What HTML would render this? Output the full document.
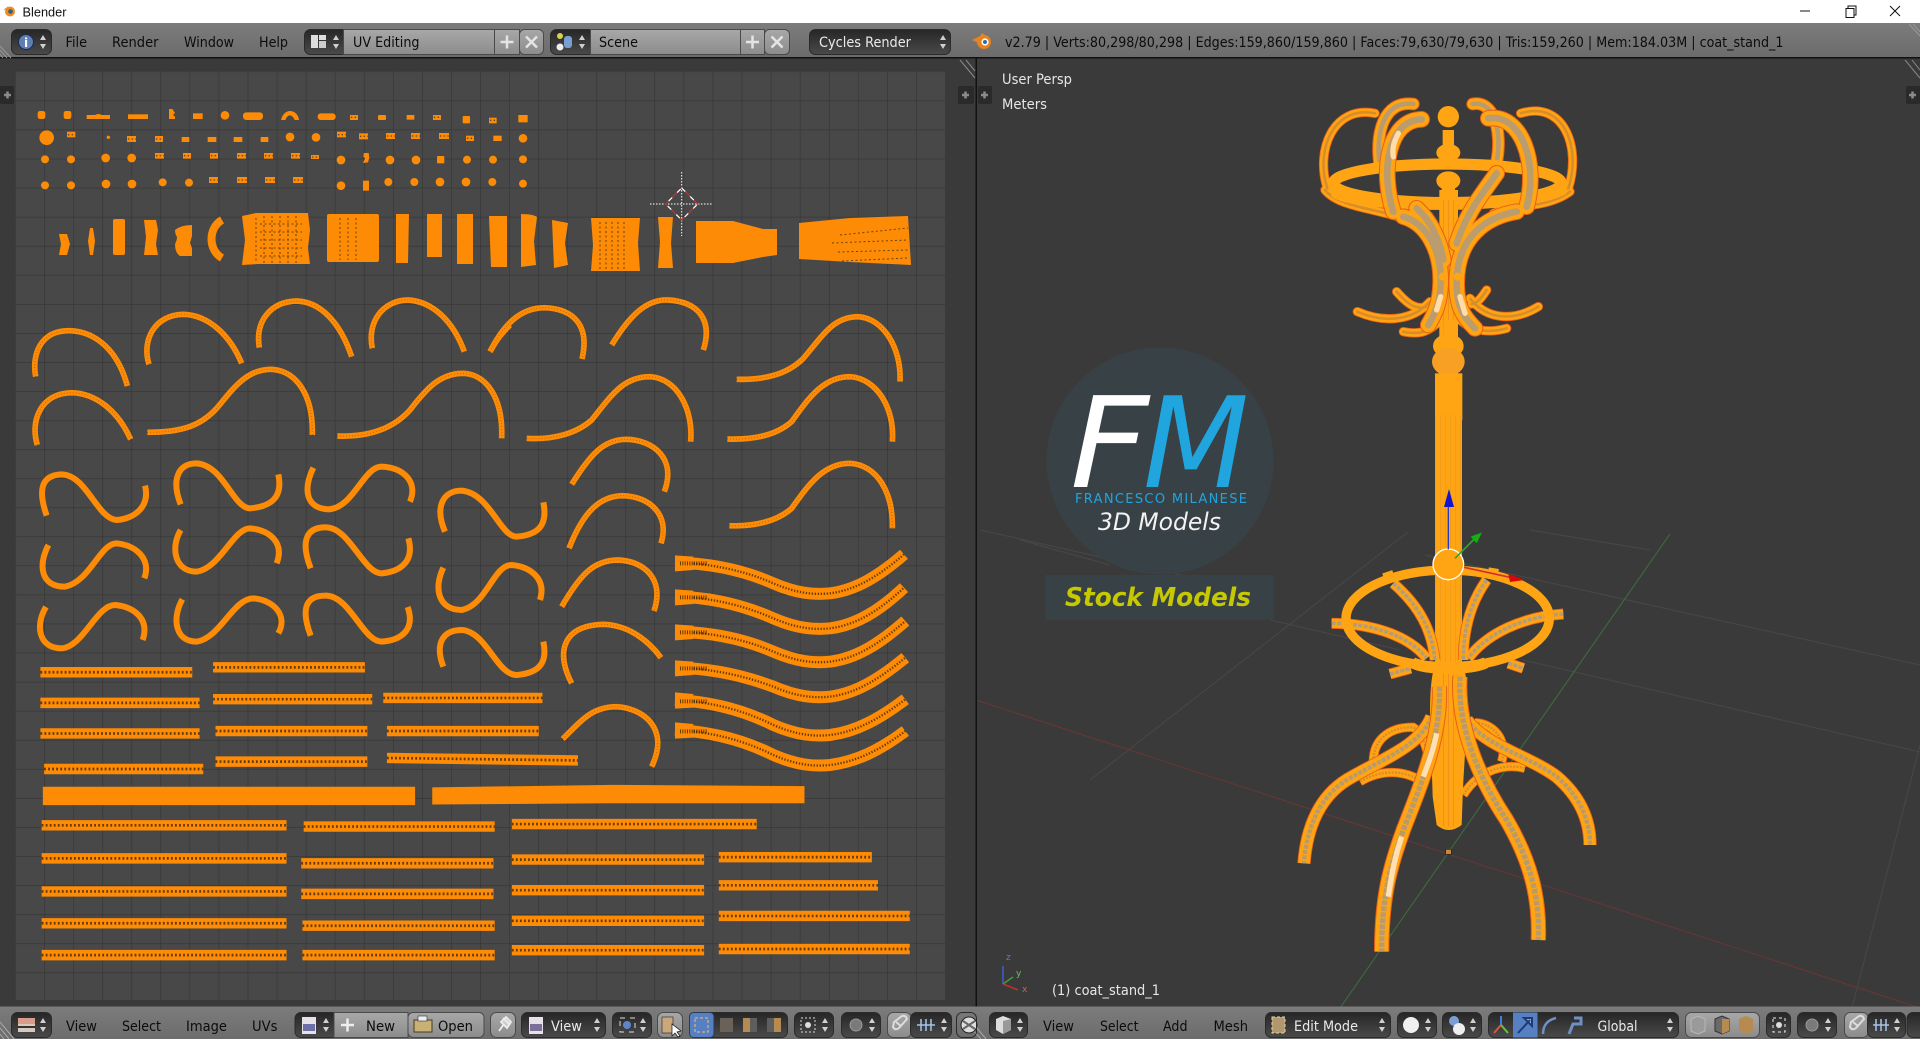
<!DOCTYPE html>
<html><head><meta charset="utf-8"><title>Blender</title>
<style>
html,body{margin:0;padding:0;background:#3a3a3a;overflow:hidden}
svg{display:block}
text{font-family:"DejaVu Sans","Liberation Sans",sans-serif;font-size:14px}
.k{fill:#0c0c0c}.w{fill:#eaeaea}
.d{fill:url(#dk);stroke:#2a2a2a;stroke-width:1}
.l{fill:url(#lt);stroke:#4a4a4a;stroke-width:1}
.o{fill:#fd8b05}
</style></head><body>
<svg xmlns="http://www.w3.org/2000/svg" width="1920" height="1039" viewBox="0 0 1920 1039">
<defs>
<linearGradient id="dk" x1="0" y1="0" x2="0" y2="1"><stop offset="0" stop-color="#262626"/><stop offset="1" stop-color="#4a4a4a"/></linearGradient>
<linearGradient id="lt" x1="0" y1="0" x2="0" y2="1"><stop offset="0" stop-color="#a8a8a8"/><stop offset="1" stop-color="#8c8c8c"/></linearGradient>
<linearGradient id="bar" x1="0" y1="0" x2="0" y2="1"><stop offset="0" stop-color="#7c7c7c"/><stop offset="1" stop-color="#6c6c6c"/></linearGradient>
<pattern id="grid" patternUnits="userSpaceOnUse" x="15.2" y="71.5" width="29.06" height="29.06"><path d="M0,0H29.06M0,0V29.06" stroke="#343434" stroke-width="1.2" fill="none"/></pattern>
<pattern id="poleg" patternUnits="userSpaceOnUse" width="5" height="7"><rect width="5" height="7" fill="#ffa412"/><path d="M0,0V7" stroke="#dc8f28" stroke-width=".8"/></pattern>
<g id="ud"><path d="M-3,-2L0,-7L3,-2ZM-3,2L0,7L3,2Z" fill="#d0d0d0"/></g>

<g id="arcsA" fill="none">
<path d="M47,275C35,210 60,135 150,137C230,140 295,200 322,303"/>
<path d="M387,238C365,170 400,90 490,88C565,90 630,150 665,235"/>
<path d="M718,188C705,110 750,50 830,48C900,50 960,110 995,215"/>
<path d="M1057,190C1040,110 1090,45 1165,45C1240,50 1300,110 1333,200"/>
<path d="M52,480C30,410 60,325 155,323C230,325 295,380 332,463"/>
<path d="M382,442C480,442 540,425 590,370C640,310 680,252 755,253C830,258 880,330 877,450"/>
<path d="M952,453C1050,457 1120,430 1170,375C1220,310 1260,265 1330,265C1400,268 1450,340 1445,460"/>
<path d="M1410,200C1430,165 1440,150 1470,120"/>
</g>
<g id="arcsB" fill="none">
<path d="M30,200C70,120 120,68 195,68C280,72 330,120 306,222"/>
<path d="M395,180C450,90 500,42 565,45C650,50 700,100 670,195"/>
<path d="M770,283C850,285 920,270 970,220C1030,150 1060,95 1135,95C1210,100 1265,190 1260,290"/>
<path d="M140,460C220,465 290,445 335,405C395,330 430,275 510,275C590,280 640,370 632,470"/>
<path d="M742,462C820,465 890,450 935,410C985,340 1030,275 1110,275C1190,280 1245,370 1237,470"/>
<path d="M275,598C330,510 370,463 440,463C520,465 590,520 553,620"/>
<path d="M267,790C310,680 360,632 430,632C510,635 570,690 543,775"/>
<path d="M245,965C300,870 340,825 415,825C490,828 555,880 522,978"/>
<path d="M275,1195C230,1110 240,1022 370,1018C440,1020 500,1060 543,1118"/>
<path d="M248,1362C310,1300 340,1265 410,1265C490,1270 570,1330 515,1445"/>
<path d="M748,722C820,725 890,710 935,670C985,600 1030,535 1110,535C1190,540 1240,620 1237,730"/>
</g>
<g id="waves" fill="none">
<path d="M585,833C700,835 800,860 880,895C950,925 1000,930 1050,925C1130,915 1200,870 1272,808"/>
<path d="M585,935C700,937 800,965 880,1000C950,1030 1000,1035 1050,1030C1130,1020 1200,975 1272,908"/>
<path d="M585,1040C700,1042 800,1065 880,1100C950,1130 1000,1135 1050,1130C1130,1120 1200,1075 1276,1008"/>
<path d="M585,1148C700,1150 800,1175 880,1205C950,1235 1000,1240 1050,1235C1130,1225 1200,1180 1276,1118"/>
<path d="M585,1245C700,1250 800,1280 880,1320C950,1350 1000,1355 1050,1350C1130,1340 1200,1300 1276,1243"/>
<path d="M585,1335C700,1340 800,1370 880,1410C950,1440 1000,1445 1050,1440C1130,1430 1200,1395 1276,1338"/>
</g>
<g id="strips" fill="none">
<path d="M33,549H157M174,545H298M33,574H163M174,571H304M313,570H443M33,599H163M176,597H300M316,597H440M36,628H166M176,622H300M316,619L472,621"/>
<path d="M34,674H234M248,675H404M418,673H618M34,701H234M246,705H403M418,702H575M587,700H712M34,728H234M246,730H403M418,727H575M587,723H717M34,754H234M247,756H404M418,752H575M587,748H743M34,780H234M247,780H404M418,776H575M587,775H743"/>
</g>

<g id="st_back" fill="none">
<path d="M300,262C285,160 310,60 400,72"/>
<path d="M650,245C668,150 640,60 578,72"/>
</g>
<g id="st_outer" fill="none">
<path d="M142,325C105,210 160,75 285,100"/>
<path d="M865,325C905,200 850,60 722,100"/>
<path d="M135,330C180,385 300,385 380,420"/>
<path d="M870,335C800,385 720,370 640,400"/>
<path d="M232,695C300,725 390,730 450,665"/>
<path d="M775,680C700,725 620,720 570,655"/>
<path d="M350,635C385,675 410,690 440,680"/>
<path d="M620,630C600,660 590,670 575,672"/>
<path d="M370,755C420,765 450,755 480,720"/>
<path d="M680,745C620,762 570,750 535,715"/>
</g>
<g id="st_front" fill="none">
<path d="M340,395C300,270 325,120 425,118"/>
<path d="M740,380C775,250 725,100 625,115"/>
<path d="M370,410C440,430 485,510 482,610C480,670 465,700 445,735"/>
<path d="M710,395C620,410 530,470 530,610C530,680 550,710 585,745"/>
<path d="M410,385C450,420 480,480 490,540"/>
<path d="M650,280C600,350 560,400 530,490"/>
</g>
<g id="sb_struts" fill="none">
<path d="M340,190C420,260 455,330 465,420"/>
<path d="M620,180C570,250 550,330 550,420"/>
<path d="M155,310C280,310 390,350 440,415"/>
<path d="M850,282C730,290 620,340 565,415"/>
<path d="M330,462L392,445"/>
<path d="M685,430L730,445"/>
</g>
<g id="sb_arch" fill="none">
<path d="M280,725C280,650 340,620 400,622C430,640 440,690 450,725"/>
<path d="M240,785C300,750 370,745 435,790"/>
<path d="M665,725C685,660 640,610 585,608"/>
<path d="M550,825C600,745 680,730 735,745"/>
</g>
<g id="sb_back" fill="none">
<path d="M455,590C420,680 300,720 200,780C120,830 80,920 72,1030"/>
<path d="M560,600C620,680 750,710 830,770C900,830 930,900 930,975"/>
</g>
<g id="sb_front" fill="none">
<path d="M478,500C485,650 420,800 370,930C330,1040 305,1130 305,1295"/>
<path d="M540,470C530,620 600,780 680,900C750,1020 780,1130 775,1260"/>
</g>
</defs>

<rect width="1920" height="1039" fill="#3a3a3a"/>
<!-- title bar -->
<rect width="1920" height="23" fill="#fff"/>
<circle cx="10" cy="11.5" r="5" fill="#f08a1a"/><circle cx="10.500" cy="11.500" r="2.300" fill="#2b5f95"/><path d="M3,10L8,6.500L9,9Z" fill="#f08a1a"/>
<text x="22.500" y="16.500" textLength="44" lengthAdjust="spacingAndGlyphs" style="font-family:'Liberation Sans',sans-serif;font-size:13px" fill="#111">Blender</text>
<path d="M1800,11H1810" stroke="#111" stroke-width="1"/>
<path d="M1846,8.500h8v9h-8zM1848,8.500v-2.500h8v9h-2" stroke="#111" fill="none" stroke-width="1"/>
<path d="M1890,6L1900,16M1900,6L1890,16" stroke="#111" stroke-width="1"/>

<!-- top bar -->
<rect y="23" width="1920" height="34" fill="url(#bar)"/>
<rect y="57" width="1920" height="1.500" fill="#111"/>
<path d="M0,46L11,58M0,50L7,58M0,54L3,58M1909,24L1920,36M1913,24L1920,32" stroke="#999" stroke-width="1" fill="none"/>
<rect class="d" x="11.500" y="29.500" width="40" height="25" rx="6"/>
<circle cx="26" cy="42" r="7.500" fill="#5d7fb5" stroke="#1c2a45"/><text x="26" y="47" text-anchor="middle" style="font-size:12px;font-weight:bold" fill="#fff">i</text>
<use href="#ud" x="43" y="42"/>
<text class="k" x="65.500" y="47" textLength="21.500" lengthAdjust="spacingAndGlyphs">File</text>
<text class="k" x="112" y="47" textLength="46.500" lengthAdjust="spacingAndGlyphs">Render</text>
<text class="k" x="184" y="47" textLength="50" lengthAdjust="spacingAndGlyphs">Window</text>
<text class="k" x="259" y="47" textLength="29" lengthAdjust="spacingAndGlyphs">Help</text>
<rect class="d" x="304.500" y="29.500" width="44" height="25" rx="6"/>
<rect x="311" y="35" width="7" height="13" fill="#ddd"/><rect x="319" y="35" width="7" height="5" fill="#ddd"/><rect x="319" y="41" width="7" height="7" fill="#ccc"/>
<use href="#ud" x="336" y="42"/>
<rect class="l" x="343.500" y="29.500" width="151" height="25"/>
<rect class="l" x="494.500" y="29.500" width="25" height="25"/>
<rect class="l" x="519.500" y="29.500" width="24" height="25" rx="5"/>
<text class="k" x="353" y="47" textLength="66.500" lengthAdjust="spacingAndGlyphs">UV Editing</text>
<path d="M500.500,42H513.500M507,35.500V48.500" stroke="#e4e4e4" stroke-width="2.500"/>
<path d="M526,36.500L537,47.500M537,36.500L526,47.500" stroke="#e4e4e4" stroke-width="2.500"/>
<rect class="d" x="550.500" y="29.500" width="44" height="25" rx="6"/>
<circle cx="560" cy="36" r="3" fill="#d8d24e"/><circle cx="560" cy="47" r="3.500" fill="#eee"/><rect x="564" y="36" width="8" height="12" rx="3" fill="#7a9ed0"/>
<use href="#ud" x="582" y="42"/>
<rect class="l" x="590.500" y="29.500" width="150" height="25"/>
<rect class="l" x="740.500" y="29.500" width="24" height="25"/>
<rect class="l" x="764.500" y="29.500" width="25" height="25" rx="5"/>
<text class="k" x="599" y="47" textLength="39" lengthAdjust="spacingAndGlyphs">Scene</text>
<path d="M746,42H759M752.500,35.500V48.500" stroke="#e4e4e4" stroke-width="2.500"/>
<path d="M771.500,36.500L782.500,47.500M782.500,36.500L771.500,47.500" stroke="#e4e4e4" stroke-width="2.500"/>
<rect class="d" x="809.500" y="29.500" width="141" height="25" rx="6"/>
<text class="w" x="819" y="47" textLength="92" lengthAdjust="spacingAndGlyphs">Cycles Render</text>
<use href="#ud" x="943" y="42"/>
<circle cx="984" cy="42" r="7" fill="#e8831f"/><circle cx="985" cy="42" r="3.600" fill="#fff"/><circle cx="985" cy="42" r="2" fill="#2f6bb0"/><path d="M972,40L980,36L982,33L985,35L978,43Z" fill="#e8831f"/>
<text class="k" x="1005" y="47" textLength="778.500" lengthAdjust="spacingAndGlyphs">v2.79 | Verts:80,298/80,298 | Edges:159,860/159,860 | Faces:79,630/79,630 | Tris:159,260 | Mem:184.03M | coat_stand_1</text>

<!-- UV panel -->
<rect x="15" y="71" width="930" height="929" fill="#484848"/>
<rect x="15" y="71" width="930" height="929" fill="url(#grid)"/>
<rect x="0" y="86" width="14" height="18" rx="2" fill="#2a2a2a"/>
<path d="M4,95H11M7.500,91.500V98.500" stroke="#8a8a8a" stroke-width="2.500"/>

<!-- small islands -->
<g class="o" transform="translate(0,60) scale(.33333)">
<rect x="113" y="153" width="23" height="24" rx="7"/><rect x="191" y="153" width="23" height="24" rx="7"/>
<path d="M260,165h25q10,-6 20,0h25v12h-70z"/><rect x="384" y="163" width="60" height="14"/>
<path d="M507,147h10l8,12l-6,6l6,5v7h-18z"/><rect x="579" y="160" width="29" height="17"/><circle cx="675" cy="166" r="13"/>
<rect x="729" y="157" width="60" height="23" rx="10"/>
<path d="M843,180C848,160 860,153 870,153C882,153 895,162 897,180H884C880,170 874,166 870,166C865,166 860,170 856,180Z"/>
<rect x="953" y="160" width="54" height="20" rx="9"/>
<rect x="1050" y="165" width="24" height="15"/><rect x="1134" y="165" width="24" height="15" rx="3"/><rect x="1220" y="165" width="23" height="14"/><rect x="1299" y="165" width="24" height="15"/>
<rect x="1388" y="168" width="22" height="22" rx="3"/><rect x="1467" y="173" width="23" height="17"/><rect x="1555" y="165" width="28" height="22"/>
<circle cx="140" cy="233" r="22"/><rect x="201" y="215" width="25" height="17"/><circle cx="325" cy="232" r="5"/>
<rect x="381" y="228" width="27" height="18"/><rect x="465" y="228" width="24" height="18"/><rect x="545" y="231" width="23" height="15"/><rect x="623" y="231" width="26" height="15"/><rect x="701" y="231" width="26" height="15"/><rect x="782" y="231" width="23" height="15"/>
<circle cx="870" cy="231" r="13"/><circle cx="948" cy="232" r="13"/>
<rect x="1011" y="215" width="27" height="17"/><rect x="1077" y="220" width="27" height="18"/><rect x="1158" y="219" width="27" height="18"/><rect x="1233" y="219" width="27" height="18"/><rect x="1317" y="219" width="30" height="18"/><rect x="1398" y="227" width="24" height="16"/><rect x="1480" y="227" width="25" height="16"/><circle cx="1569" cy="235" r="13"/>
<circle cx="135" cy="298" r="12"/><circle cx="213" cy="298" r="12"/><circle cx="317" cy="294" r="13"/><circle cx="395" cy="294" r="13"/>
<rect x="465" y="279" width="27" height="17"/><rect x="549" y="279" width="24" height="17"/><rect x="630" y="279" width="24" height="17"/><rect x="711" y="279" width="27" height="17"/><rect x="792" y="279" width="27" height="17"/><rect x="873" y="279" width="27" height="17"/><rect x="933" y="285" width="24" height="12"/>
<circle cx="1023" cy="300" r="13"/><path d="M1092,279h14l2,14l-4,14l-15,2l6,-14l-5,-6z"/><circle cx="1170" cy="300" r="13"/><circle cx="1248" cy="300" r="13"/><rect x="1311" y="288" width="22" height="22" rx="3"/><circle cx="1401" cy="299" r="12"/><circle cx="1479" cy="299" r="12"/><circle cx="1569" cy="298" r="12"/>
<circle cx="135" cy="376" r="12"/><circle cx="213" cy="376" r="12"/><circle cx="318" cy="372" r="13"/><circle cx="396" cy="372" r="13"/><circle cx="488" cy="367" r="12"/><circle cx="567" cy="368" r="12"/>
<rect x="627" y="351" width="27" height="18"/><rect x="711" y="351" width="30" height="18"/><rect x="795" y="351" width="30" height="18"/><rect x="879" y="351" width="30" height="18"/>
<circle cx="1023" cy="377" r="13"/><rect x="1089" y="362" width="18" height="30"/><circle cx="1165" cy="366" r="12"/><circle cx="1243" cy="366" r="12"/><circle cx="1320" cy="366" r="13"/><circle cx="1398" cy="366" r="13"/><circle cx="1477" cy="366" r="12"/><circle cx="1569" cy="371" r="12"/>
</g>
<g transform="translate(0,60) scale(.33333)" stroke="#3a3a3a" stroke-width="4" fill="none" stroke-dasharray="4 7" stroke-dashoffset="-3" opacity=".85">
<path d="M1050,172H1074M1299,172H1323M201,224H226M381,237H408M465,237H489M1011,224H1038M1077,229H1104M1158,228H1185M1233,228H1260M1317,228H1347M1398,235H1422M465,287H492M549,287H573M630,287H654M711,287H738M792,287H819M873,287H900M933,291H957M627,360H654M711,360H741M795,360H825M879,360H909M1467,181H1490"/>
</g>

<!-- top strip row -->
<g class="o">
<path d="M59,234h8l3,10l-3,11h-8l2,-11z"/><path d="M90,228h3l2,13l-2,14h-3l-2,-14z"/>
<rect x="113" y="219" width="12" height="36" rx="2"/><path d="M144,220h12l2,10l-2,14l2,11h-14l2,-18z"/>
<path d="M175,230q6,-5 17,-5v11l-2,7l2,5v8h-12q-5,-3 -5,-12q2,-4 2,-7q-2,-3 -2,-7z"/>
<path d="M242,216L256,213H308L310,230L308,248L310,264H258L242,265L245,240Z"/><rect x="327" y="214" width="52" height="48" rx="2"/>
<path d="M396,214h13l-1,49h-12zM427,214h15v43h-15zM457,214h16v50h-16zM489,216h18v51h-16z"/>
<path d="M521,214q12,0 16,3l-3,24l2,24l-15,2zM552,220l16,3l-3,20l3,22l-14,3zM591,218h49l-2,25l2,28h-49l2,-26zM658,217h15l-2,26l2,25h-15l2,-26z"/>
<path d="M696,221H733L763,229L777,229V255L763,257L733,263H696Z"/>
<path d="M799,223L850,218L908,216L911,265L850,262L799,259Z"/>
</g>
<path d="M222,220C208,228 208,250 222,258" fill="none" stroke="#fd8b05" stroke-width="8"/>
<g stroke="#3c2a10" stroke-width="1" fill="none" stroke-dasharray="2 2.500" opacity=".75">
<path d="M256,218V262M264,216V264M272,216V264M280,216V264M288,216V264M296,216V264M340,218V260M348,218V260M356,218V260M600,222V270M606,222V270M612,222V270M618,222V270M624,222V270"/>
<path d="M260,224H302M260,232H302M260,240H302M260,248H302M260,256H302"/>
<path d="M840,235L908,228M832,243L908,240M838,252L908,250M842,261L908,258"/>
</g>

<!-- crosshair -->
<path d="M650,204H713M681.700,172V236" stroke="#fff" stroke-width="1" stroke-dasharray="1.500 1.500" fill="none"/>
<path d="M681.700,188L697.700,204L681.700,220L665.700,204Z" stroke="#b03a3a" stroke-width="1.200" fill="none"/>
<path d="M681.700,188L697.700,204L681.700,220L665.700,204Z" stroke="#fff" stroke-width="1.200" fill="none" stroke-dasharray="5 7"/>

<!-- curved islands -->
<g transform="translate(20,285) scale(.33333)">
<use href="#arcsA" stroke="#fd8b05" stroke-width="17"/>
<use href="#arcsA" stroke="#2a2010" stroke-width="3" stroke-dasharray="2 7" opacity=".45"/>
<g fill="none" stroke="#fd8b05" stroke-width="18">
<path d="M80,692C55,620 60,570 125,568C200,570 230,700 290,705C350,700 390,660 375,602"/>
<path d="M482,658C455,590 470,535 530,535C610,540 640,670 690,670C750,665 790,640 775,568"/>
<path d="M880,548C850,610 855,670 925,673C1000,670 1030,545 1085,545C1150,548 1195,590 1170,650"/>
<path d="M85,780C55,840 60,905 135,905C210,890 240,775 290,775C345,780 395,820 373,880"/>
<path d="M482,735C450,790 465,860 530,860C600,850 640,730 690,730C745,735 795,770 770,835"/>
<path d="M872,850C845,780 850,725 920,727C990,730 1030,865 1085,865C1140,860 1185,830 1165,760"/>
<path d="M78,966C45,1020 55,1090 125,1090C190,1085 230,960 285,960C340,965 390,1000 368,1065"/>
<path d="M487,943C455,1000 465,1070 530,1070C600,1060 640,940 700,940C760,945 805,990 775,1045"/>
<path d="M872,1052C845,980 850,930 920,932C990,935 1030,1070 1085,1070C1150,1065 1185,1030 1163,966"/>
<path d="M1275,740C1245,670 1265,617 1325,617C1410,625 1440,755 1490,755C1550,750 1585,725 1570,652"/>
<path d="M1270,848C1240,910 1255,975 1325,975C1400,960 1420,840 1475,840C1530,845 1580,880 1560,945"/>
<path d="M1270,1145C1245,1080 1265,1035 1325,1035C1400,1040 1430,1170 1490,1170C1550,1165 1585,1140 1570,1070"/>
</g>
</g>
<g transform="translate(480,285) scale(.33333)">
<use href="#arcsB" stroke="#fd8b05" stroke-width="17"/>
<use href="#arcsB" stroke="#2a2010" stroke-width="3" stroke-dasharray="2 7" opacity=".45"/>
<use href="#waves" stroke="#fd8b05" stroke-width="36"/>
<use href="#waves" stroke="#2a1a05" stroke-width="7" stroke-dasharray="4 5" opacity=".7"/>
<path fill="#fd8b05" d="M585,811L640,815V855L585,859ZM585,913L640,917V957L585,961ZM585,1018L640,1022V1062L585,1066ZM585,1126L640,1130V1170L585,1174ZM585,1222L640,1227V1268L585,1271ZM585,1312L640,1317V1358L585,1361Z"/>
<path d="M600,835H680M600,937H680M600,1042H680M600,1150H680M600,1249H680M600,1339H680" stroke="#2a1a05" stroke-width="12" stroke-dasharray="3 4" fill="none" opacity=".7"/>
</g>

<!-- straight strips -->
<g transform="scale(1.2245)">
<use href="#strips" stroke="#fd8b05" stroke-width="8.500"/>
<use href="#strips" stroke="#2a1a05" stroke-width="2.200" stroke-dasharray="1.500 1.800" opacity=".7"/>
<path d="M35,642.500H339V657.500H35Z" fill="#fd8b05"/>
<path d="M353,643L500,641L657,642V656L500,656L353,657Z" fill="#fd8b05"/>
</g>

<!-- viewport -->
<rect x="976" y="58.500" width="944" height="950" fill="#3a3a3a"/>
<g fill="none" stroke-width="1">
<path d="M980,530L1248,590M1425,555L1920,665M1530,530L1650,550M1523,660L1920,752" stroke="#484848"/>
<path d="M1408,532L1090,780M1020,540L1110,565M1270,620L1400,650M1920,745L1852,1008" stroke="#484848"/>
<path d="M976,700L1920,1008" stroke="#6a3636"/>
<path d="M1670,534L1340,1008" stroke="#3f6f3f"/>
</g>
<rect x="975.500" y="58" width="1.500" height="950" fill="#111"/>
<path d="M960,60L975,78M966,60L975,71M1905,60L1920,78M1912,60L1920,70" stroke="#8a8a8a" stroke-width="1" fill="none"/>
<rect x="958" y="86" width="16" height="18" rx="2" fill="#2a2a2a"/><rect x="978" y="86" width="14" height="18" rx="2" fill="#2a2a2a"/><rect x="1906" y="86" width="14" height="18" rx="2" fill="#2a2a2a"/>
<path d="M962,95H969M965.500,91.500V98.500M981,95H988M984.500,91.500V98.500M1909,95H1916M1912.500,91.500V98.500" stroke="#8a8a8a" stroke-width="2.500"/>
<text x="1002" y="84" textLength="70" lengthAdjust="spacingAndGlyphs" fill="#e6e6e6">User Persp</text>
<text x="1002" y="109" textLength="45" lengthAdjust="spacingAndGlyphs" fill="#e6e6e6">Meters</text>
<text x="1052" y="995" textLength="108" lengthAdjust="spacingAndGlyphs" fill="#e6e6e6">(1) coat_stand_1</text>
<path d="M1003,984V966" stroke="#3a5ed0" stroke-width="1.500"/><path d="M1003,984L1013,977" stroke="#3aa03a" stroke-width="1.500"/>
<path d="M1003,984L1018,990" stroke="#c03030" stroke-width="1.500"/>
<text x="1006" y="960" style="font-size:9px" fill="#5a78e0">z</text><text x="1016" y="976" style="font-size:9px" fill="#6cc06c">y</text><text x="1022" y="992" style="font-size:9px" fill="#d06060">x</text>

<!-- logo -->
<circle cx="1160" cy="461" r="113.500" fill="#384145"/>
<rect x="1045.500" y="575" width="228" height="44.500" fill="#384145"/>
<text x="1070" y="487" fill="#fff" textLength="79" lengthAdjust="spacingAndGlyphs" style="font-size:126px;font-style:oblique">F</text>
<text x="1143" y="487" fill="#21a5de" textLength="106" lengthAdjust="spacingAndGlyphs" style="font-size:126px;font-style:oblique">M</text>
<text x="1075" y="503" fill="#21a5de" textLength="172" style="font-size:13px">FRANCESCO MILANESE</text>
<text x="1098" y="530" fill="#f2f2f2" textLength="123" lengthAdjust="spacingAndGlyphs" style="font-size:24px;font-style:oblique">3D Models</text>
<text x="1065" y="606" fill="#c6c800" textLength="186" lengthAdjust="spacingAndGlyphs" style="font-size:26px;font-style:oblique;font-weight:bold">Stock Models</text>

<!-- coat stand: upper -->
<g transform="translate(1280,80) scale(.33333)" stroke-linecap="round">
<use href="#st_back" stroke="#e85f14" stroke-width="38"/>
<use href="#st_back" stroke="#ffa514" stroke-width="32"/>
<use href="#st_back" stroke="#b89c70" stroke-width="14" stroke-dasharray="14 4"/>
<use href="#st_outer" stroke="#e85f14" stroke-width="28"/>
<use href="#st_outer" stroke="#ffa514" stroke-width="23"/>
<use href="#st_outer" stroke="#d98c2a" stroke-width="8" stroke-dasharray="6 4"/>
<ellipse cx="502" cy="310" rx="342" ry="58" fill="none" stroke="#ffa514" stroke-width="34"/>
<path d="M170,340C260,385 740,385 845,330" fill="none" stroke="#ffa514" stroke-width="34"/>
<rect x="478" y="330" width="56" height="560" fill="#ffa514"/>
<path d="M490,340V880M505,340V880M520,340V880" stroke="#e8891e" stroke-width="2"/>
<use href="#st_front" stroke="#e85f14" stroke-width="50"/>
<use href="#st_front" stroke="#ffa514" stroke-width="44"/>
<use href="#st_front" stroke="#bb9c6e" stroke-width="20" stroke-dasharray="14 4"/>
<path d="M340,230C335,200 345,180 355,160M482,650L470,690M540,650L555,700" stroke="#ffdcaa" stroke-width="16" fill="none"/>
<circle cx="505" cy="110" r="32" fill="#ffa514"/>
<rect x="488" y="150" width="34" height="60" fill="#ffa514"/>
<ellipse cx="505" cy="218" rx="36" ry="26" fill="#ffa514"/><ellipse cx="505" cy="302" rx="36" ry="28" fill="#ffa514"/>
<rect x="485" y="300" width="40" height="60" fill="#ffa514"/>
<circle cx="488" cy="590" r="12" fill="#ffa514"/><circle cx="533" cy="590" r="12" fill="#ffa514"/>
<rect x="490" y="720" width="34" height="60" fill="#ffa514"/>
<ellipse cx="505" cy="798" rx="46" ry="36" fill="#ffa514"/><ellipse cx="505" cy="845" rx="49" ry="42" fill="#f7a024"/>
<rect x="465" y="880" width="82" height="140" fill="#ffa514"/>
</g>
<!-- pole -->
<rect x="1435" y="415" width="27" height="275" fill="url(#poleg)"/>
<!-- coat stand: lower -->
<g transform="translate(1280,520) scale(.33333)" stroke-linecap="butt">
<use href="#sb_arch" stroke="#e85f14" stroke-width="28"/><use href="#sb_arch" stroke="#ffa514" stroke-width="23"/><use href="#sb_arch" stroke="#d98c2a" stroke-width="7" stroke-dasharray="6 4"/>
<use href="#sb_back" stroke="#e85f14" stroke-width="40"/><use href="#sb_back" stroke="#ffa514" stroke-width="35"/><use href="#sb_back" stroke="#b89a6c" stroke-width="13" stroke-dasharray="12 4"/>
<use href="#sb_struts" stroke="#e85f14" stroke-width="33"/><use href="#sb_struts" stroke="#ffa514" stroke-width="28"/><use href="#sb_struts" stroke="#b39b7c" stroke-width="11" stroke-dasharray="12 4"/>
<ellipse cx="503" cy="295" rx="305" ry="145" fill="none" stroke="#ffa514" stroke-width="28"/>
<path d="M310,170l30,-10M625,152l30,5" stroke="#ffa514" stroke-width="20"/>
<path d="M462,445H552C575,520 552,700 548,830L545,915Q505,945 470,915L458,830C455,700 440,520 462,445Z" fill="#ffa514"/>
<path d="M490,460V920M505,460V920M520,460V920" stroke="#e8891e" stroke-width="2"/>
<use href="#sb_front" stroke="#e85f14" stroke-width="46"/><use href="#sb_front" stroke="#ffa514" stroke-width="40"/><use href="#sb_front" stroke="#b89a6c" stroke-width="16" stroke-dasharray="14 4"/>
<path d="M325,1130C335,1060 345,1010 365,950M470,640C460,690 445,730 430,770" stroke="#ffdfb4" stroke-width="16" fill="none"/>
<path d="M397,428C440,450 570,450 618,428" stroke="#ffa514" stroke-width="34" fill="none"/>
<rect x="497" y="988" width="17" height="15" fill="#c8883c" stroke="#222" stroke-width="2"/>
<circle cx="505" cy="133" r="46" fill="#ffa514" stroke="#fff" stroke-width="4"/>
<path d="M505,-60V88" stroke="#2b3ac0" stroke-width="4"/>
<path d="M525,115L585,55" stroke="#2fa82f" stroke-width="5"/><path d="M606,37L572,50L590,70Z" fill="#12b012"/>
<path d="M552,142L690,172" stroke="#d03030" stroke-width="5"/><path d="M735,180L685,162L690,186Z" fill="#d80808"/>
</g>
<path d="M1449,489L1444,507H1454Z" fill="#1515d0"/>

<!-- bottom bar -->
<rect y="1006.500" width="1920" height="32.500" fill="url(#bar)"/>
<path d="M0,1022L14,1039M0,1028L9,1039M0,1034L4,1039M965,1022L981,1039M972,1022L986,1039" stroke="#aaa" stroke-width="1" fill="none"/>
<rect class="d" x="11.500" y="1012.500" width="40" height="25" rx="6"/>
<rect x="18" y="1018" width="17" height="14" fill="#d8c8bc"/><rect x="18" y="1018" width="17" height="6" fill="#d89c8a"/><rect x="18" y="1026" width="17" height="2" fill="#333"/>
<use href="#ud" x="43" y="1025"/>
<text class="k" x="66" y="1031" textLength="31" lengthAdjust="spacingAndGlyphs">View</text>
<text class="k" x="122" y="1031" textLength="39" lengthAdjust="spacingAndGlyphs">Select</text>
<text class="k" x="186" y="1031" textLength="41" lengthAdjust="spacingAndGlyphs">Image</text>
<text class="k" x="252" y="1031" textLength="25.500" lengthAdjust="spacingAndGlyphs">UVs</text>
<rect class="d" x="295" y="1012.500" width="44" height="25" rx="6"/>
<rect x="302" y="1017" width="14" height="17" fill="#e6e0e8"/><rect x="303" y="1024" width="12" height="7" fill="#6d6fa8"/>
<use href="#ud" x="326" y="1025"/>
<rect class="l" x="334" y="1012.500" width="74" height="25"/>
<rect class="l" x="408" y="1012.500" width="76" height="25" rx="5"/>
<path d="M341,1025H354M347.500,1018.500V1031.500" stroke="#eee" stroke-width="2.500"/>
<text class="k" x="366" y="1031" textLength="29" lengthAdjust="spacingAndGlyphs">New</text>
<rect x="414" y="1020" width="18" height="12" fill="#c9b074" stroke="#4a3a1a"/><rect x="418" y="1016" width="9" height="5" fill="#eee" stroke="#444" stroke-width=".7"/>
<text class="k" x="438" y="1031" textLength="35" lengthAdjust="spacingAndGlyphs">Open</text>
<rect class="l" x="490.500" y="1012.500" width="25" height="25" rx="6"/>
<path d="M499,1031L504,1024M503,1018L510,1025M506,1017L511,1022L507,1028L501,1022Z" stroke="#eee" stroke-width="1.800" fill="#ccc"/>
<rect class="d" x="521.500" y="1012.500" width="84" height="25" rx="6"/>
<rect x="529" y="1017" width="14" height="17" fill="#e6e0e8"/><rect x="530" y="1024" width="12" height="7" fill="#7c6f9a"/>
<text class="w" x="551" y="1031" textLength="31" lengthAdjust="spacingAndGlyphs">View</text>
<use href="#ud" x="597" y="1025"/>
<rect class="d" x="612.500" y="1012.500" width="39" height="25" rx="6"/>
<rect x="620" y="1018" width="15" height="14" fill="none" stroke="#ddd" stroke-dasharray="5 5"/><circle cx="627" cy="1025" r="4" fill="#5d86c8"/>
<use href="#ud" x="643" y="1025"/>
<rect class="l" x="657.500" y="1012.500" width="25" height="25" rx="6"/>
<rect x="662" y="1017" width="11" height="16" fill="#c9a97a" stroke="#333" stroke-width=".7"/><path d="M672,1024L672,1036L675,1033L678,1037L680,1036L677,1032L681,1031Z" fill="#fff" stroke="#111" stroke-width=".7"/>
<rect class="d" x="689.500" y="1012.500" width="98" height="25" rx="6"/>
<rect x="689.500" y="1012.500" width="24.500" height="25" rx="4" fill="#5680c2" stroke="#2a3a5a"/>
<rect x="695" y="1018" width="13" height="14" fill="none" stroke="#f0c070" stroke-dasharray="3 2"/>
<rect x="720" y="1018" width="13" height="14" fill="#6a6258"/><rect x="743" y="1018" width="14" height="14" fill="#5e5e5e"/><rect x="743" y="1018" width="7" height="14" fill="#b58b52"/><rect x="767" y="1018" width="14" height="14" fill="#5e5e5e"/><rect x="774" y="1018" width="7" height="14" fill="#b58b52"/>
<rect class="d" x="794.500" y="1012.500" width="39" height="25" rx="6"/>
<rect x="801" y="1018" width="14" height="14" fill="none" stroke="#ddd" stroke-dasharray="2 2"/><circle cx="808" cy="1025" r="3" fill="#ddd"/>
<use href="#ud" x="825" y="1025"/>
<rect class="d" x="841.500" y="1012.500" width="39" height="25" rx="6"/>
<circle cx="856" cy="1025" r="6" fill="#7a7a7a" stroke="#999"/><use href="#ud" x="872" y="1025"/>
<rect class="l" x="887.500" y="1012.500" width="24" height="25" rx="6"/>
<path d="M894,1022l8,-6q4,-1 5,3l-8,9q-4,3 -6,-1zM896,1022l5,4" stroke="#ddd" stroke-width="2" fill="none"/>
<rect class="d" x="910.500" y="1012.500" width="41" height="25" rx="6"/>
<path d="M917,1025H935M921,1019V1031M931,1019V1031M926,1019V1031" stroke="#a8c4ea" stroke-width="1.500"/><use href="#ud" x="944" y="1025"/>
<circle cx="969" cy="1025" r="8" fill="#ddd" stroke="#222"/><path d="M963,1021L975,1029M963,1029L975,1021" stroke="#666" stroke-width="2"/>
<rect x="956.500" y="1012.500" width="20" height="25" rx="6" fill="none" stroke="#2a2a2a"/>

<rect class="d" x="989.500" y="1012.500" width="38" height="25" rx="6"/>
<path d="M996,1019L1003,1016L1011,1019V1030L1003,1034L996,1030Z" fill="#ddd"/><path d="M1003,1021V1034L1011,1030V1019Z" fill="#999"/>
<use href="#ud" x="1020" y="1025"/>
<text class="k" x="1043" y="1031" textLength="31" lengthAdjust="spacingAndGlyphs">View</text>
<text class="k" x="1100" y="1031" textLength="38.500" lengthAdjust="spacingAndGlyphs">Select</text>
<text class="k" x="1163" y="1031" textLength="24.500" lengthAdjust="spacingAndGlyphs">Add</text>
<text class="k" x="1213.500" y="1031" textLength="34.500" lengthAdjust="spacingAndGlyphs">Mesh</text>
<rect class="d" x="1265.500" y="1012.500" width="125" height="25" rx="6"/>
<rect x="1272" y="1017" width="13" height="16" fill="#b09870" stroke="#e8d4a8" stroke-dasharray="3 2"/>
<text class="w" x="1294" y="1031" textLength="64" lengthAdjust="spacingAndGlyphs">Edit Mode</text>
<use href="#ud" x="1382" y="1025"/>
<rect class="d" x="1397.500" y="1012.500" width="39" height="25" rx="6"/><circle cx="1411" cy="1025" r="8" fill="#f0f0f0"/><use href="#ud" x="1428" y="1025"/>
<rect class="d" x="1442.500" y="1012.500" width="39" height="25" rx="6"/><circle cx="1454" cy="1021" r="5" fill="#7a9ed0"/><circle cx="1459" cy="1029" r="6" fill="#eee"/><use href="#ud" x="1473" y="1025"/>
<rect class="d" x="1488.500" y="1012.500" width="190" height="25" rx="6"/>
<path d="M1501,1025V1016" stroke-width="2" stroke="#3f7fe0" fill="none"/><path d="M1501,1025L1494,1033" stroke="#d85a3a" stroke-width="2"/><path d="M1501,1025L1508,1033" stroke="#6cc040" stroke-width="2"/>
<rect x="1513" y="1012.500" width="24.500" height="25" fill="#5680c2"/>
<path d="M1518,1033L1530,1020M1524,1018H1532V1026Z" stroke="#1f3a70" stroke-width="2" fill="#8fb4e6"/>
<path d="M1543,1034C1543,1026 1547,1020 1556,1018" stroke="#6f90c4" stroke-width="2.500" fill="none"/>
<path d="M1569,1034L1573,1024H1581V1018H1574" stroke="#6f90c4" stroke-width="3" fill="none"/>
<text class="w" x="1597.500" y="1031" textLength="40" lengthAdjust="spacingAndGlyphs">Global</text>
<use href="#ud" x="1670" y="1025"/>
<rect class="l" x="1685.500" y="1012.500" width="74" height="25" rx="6"/>
<path d="M1691,1019L1698,1016L1705,1019V1031L1698,1034L1691,1031Z" fill="#9a9a9a" stroke="#b8b8b8"/>
<path d="M1715,1019L1722,1016L1729,1019V1031L1722,1034L1715,1031Z" fill="#6a6a6a" stroke="#333"/><path d="M1722,1019V1034L1729,1031V1019Z" fill="#b58b52"/>
<path d="M1739,1019L1746,1016L1753,1019V1031L1746,1034L1739,1031Z" fill="#b58b52"/>
<rect class="d" x="1766.500" y="1012.500" width="24" height="25" rx="6"/>
<rect x="1773" y="1018" width="12" height="14" fill="none" stroke="#eee" stroke-dasharray="3 3"/><circle cx="1779" cy="1025" r="3" fill="#ddd"/>
<rect class="d" x="1797.500" y="1012.500" width="39" height="25" rx="6"/><circle cx="1812" cy="1025" r="6" fill="#7a7a7a" stroke="#999"/><use href="#ud" x="1828" y="1025"/>
<rect class="l" x="1844.500" y="1012.500" width="24" height="25" rx="6"/>
<path d="M1851,1022l8,-6q4,-1 5,3l-8,9q-4,3 -6,-1zM1853,1022l5,4" stroke="#ddd" stroke-width="2" fill="none"/>
<rect class="d" x="1867.500" y="1012.500" width="38" height="25" rx="6"/>
<path d="M1873,1025H1889M1876,1019V1031M1886,1019V1031M1881,1019V1031" stroke="#a8c4ea" stroke-width="1.500"/><use href="#ud" x="1897" y="1025"/>
<rect class="d" x="1907" y="1012.500" width="30" height="25" rx="6"/>
</svg>
</body></html>
